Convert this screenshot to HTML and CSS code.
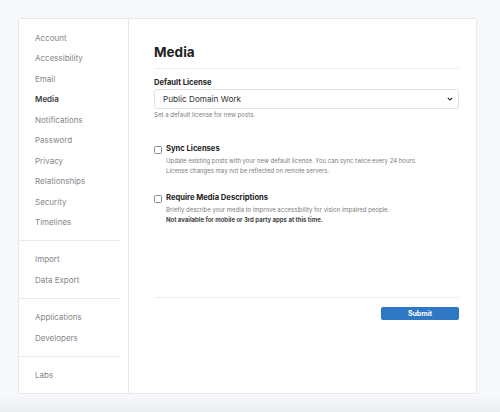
FILE: index.html
```html
<!DOCTYPE html>
<html>
<head>
<meta charset="utf-8">
<link rel="stylesheet" href="styles.css">
</head>
<body>
<div class="card">
  <nav class="sidebar">
    <ul class="group first">
      <li>Account</li>
      <li>Accessibility</li>
      <li>Email</li>
      <li class="active">Media</li>
      <li>Notifications</li>
      <li>Password</li>
      <li>Privacy</li>
      <li>Relationships</li>
      <li>Security</li>
      <li>Timelines</li>
    </ul>
    <ul class="group">
      <li>Import</li>
      <li>Data Export</li>
    </ul>
    <ul class="group">
      <li>Applications</li>
      <li>Developers</li>
    </ul>
    <ul class="group last">
      <li>Labs</li>
    </ul>
  </nav>
  <main class="main">
    <h1 class="title">Media</h1>
    <div class="field">
      <div class="label">Default License</div>
      <div class="select">
        <span>Public Domain Work</span>
        <svg class="chev" width="6" height="4" viewBox="0 0 6 4"><path d="M0.8 0.8 L3 3 L5.2 0.8" fill="none" stroke="#333" stroke-width="1.2"/></svg>
      </div>
      <div class="help">Set a default license for new posts.</div>
    </div>
    <div class="check first">
      <span class="box"></span>
      <div class="check-body">
        <div class="check-label">Sync Licenses</div>
        <div class="desc">Update existing posts with your new default license. You can sync twice every 24 hours.</div>
        <div class="desc">License changes may not be reflected on remote servers.</div>
      </div>
    </div>
    <div class="check second">
      <span class="box"></span>
      <div class="check-body">
        <div class="check-label">Require Media Descriptions</div>
        <div class="desc">Briefly describe your media to improve accessibility for vision impaired people.</div>
        <div class="desc strong">Not available for mobile or 3rd party apps at this time.</div>
      </div>
    </div>
    <div class="footer">
      <button class="submit">Submit</button>
    </div>
  </main>
</div>
</body>
</html>
```
FILE: styles.css
```css
html, body {
  margin: 0;
  padding: 0;
}
body {
  width: 500px;
  height: 412px;
  overflow: hidden;
  font-family: Inter, "Noto Sans", sans-serif;
  background: linear-gradient(to bottom, #f6f8fa 0, #f6f8fa 396px, #e9ebee 412px);
  padding: 18px 0 0 18px;
  box-sizing: border-box;
}
.card {
  width: 459px;
  height: 376px;
  box-sizing: border-box;
  background: #fff;
  border: 1px solid #e6e8eb;
  border-radius: 2px;
  display: flex;
}
.sidebar {
  width: 110px;
  flex: none;
  border-right: 1px solid #e4e6e9;
  padding-right: 8px;
  box-sizing: border-box;
}
.group {
  list-style: none;
  margin: 0;
  padding: 8px 0;
  border-bottom: 1px solid #e8eaed;
}
.group.first {
  padding-top: 9px;
}
.group.last {
  border-bottom: none;
}
.group li {
  height: 20.45px;
  line-height: 20.45px;
  padding-left: 16px;
  font-size: 8px;
  color: #83878b;
}
.group li.active {
  color: #3a3d40;
  font-weight: 600;
}
.main {
  flex: 1;
  padding: 0 17px 0 25px;
  display: flex;
  flex-direction: column;
}
.title {
  margin: 24px 0 0;
  height: 25px;
  line-height: 18px;
  font-size: 13.5px;
  font-weight: 700;
  color: #222;
  border-bottom: 1px solid #eceef0;
}
.field {
  margin-top: 9px;
}
.label {
  font-size: 7.6px;
  font-weight: 700;
  color: #222;
  line-height: 10px;
}
.select {
  margin-top: 1px;
  height: 20px;
  box-sizing: border-box;
  border: 1px solid #dfe2e6;
  border-radius: 3px;
  display: flex;
  align-items: center;
  justify-content: space-between;
  padding: 0 5px 0 8px;
  font-size: 8.2px;
  color: #333;
}
.chev {
  display: block;
}
.help {
  margin-top: 2px;
  font-size: 6.1px;
  color: #7a7d80;
  line-height: 8px;
}
.check {
  display: flex;
  gap: 4px;
}
.check.first {
  margin-top: 24px;
}
.check.second {
  margin-top: 17px;
}
.box {
  width: 6px;
  height: 6px;
  margin-top: 3px;
  border: 0.8px solid #8a8d90;
  border-radius: 1.5px;
  flex: none;
}
.check-label {
  font-size: 7.6px;
  font-weight: 700;
  color: #222;
  line-height: 12px;
  margin-bottom: 1px;
}
.desc {
  font-size: 6px;
  color: #7a7d80;
  line-height: 9.6px;
}
.desc.strong {
  font-weight: 700;
  color: #444;
}
.footer {
  margin-top: auto;
  margin-bottom: 73px;
  border-top: 1px solid #eceef0;
  padding-top: 9px;
  display: flex;
  justify-content: flex-end;
}
.submit {
  width: 78px;
  height: 13px;
  border: none;
  border-radius: 2px;
  background: #2f78c4;
  color: #fff;
  font-family: Inter, "Noto Sans", sans-serif;
  font-size: 7px;
  font-weight: 700;
  padding: 0;
}
```
